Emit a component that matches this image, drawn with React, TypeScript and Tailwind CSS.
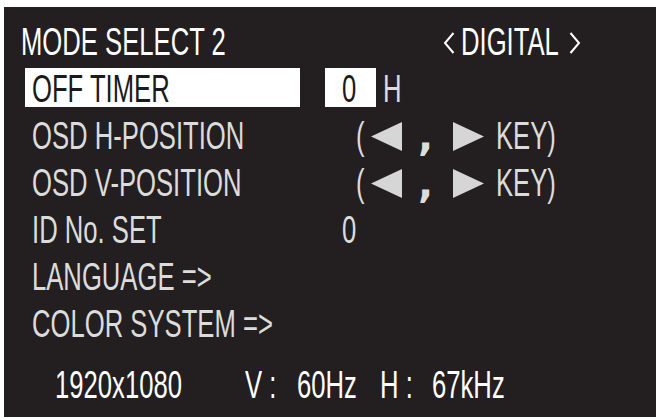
import clsx from "clsx";
import type { ReactNode } from "react";

// condensed OSD lettering: Liberation Sans squeezed horizontally
function T({ children, className }: { children: ReactNode; className?: string }) {
  return (
    <span
      className={clsx(
        "inline-block origin-left scale-x-[0.675] whitespace-nowrap",
        className
      )}
    >
      {children}
    </span>
  );
}

function Chevron({ dir }: { dir: "left" | "right" }) {
  return (
    <svg width="12" height="22" viewBox="0 0 12 22" className="mt-[13px] shrink-0">
      <polyline
        points={dir === "left" ? "10.5,1 2,11 10.5,21" : "1.5,1 10,11 1.5,21"}
        fill="none"
        stroke="#ffffff"
        strokeWidth="2"
      />
    </svg>
  );
}

function Arrow({ dir }: { dir: "left" | "right" }) {
  return (
    <svg width="31" height="29" viewBox="0 0 31 29" className="mt-[9px] shrink-0">
      <polygon
        points={dir === "left" ? "0,14.5 31,0 31,29" : "0,0 31,14.5 0,29"}
        fill="#d6d6d6"
      />
    </svg>
  );
}

function KeyRow({ label }: { label: string }) {
  return (
    <div className="flex h-[47px] items-start">
      <div className="w-[352px] shrink-0 pl-[28px]">
        <T>{label}</T>
      </div>
      <div className="w-[15px] shrink-0">
        <T>(</T>
      </div>
      <Arrow dir="left" />
      <div className="ml-[16px] w-[35px] shrink-0 font-['DejaVu_Sans',sans-serif] text-[40px] font-bold">
        ,
      </div>
      <Arrow dir="right" />
      <div className="ml-[12px]">
        <T>KEY)</T>
      </div>
    </div>
  );
}

function Row({ label, value }: { label: string; value?: string }) {
  return (
    <div className="flex h-[47px] items-start">
      <div className="w-[338px] shrink-0 pl-[28px]">
        <T>{label}</T>
      </div>
      {value && <T>{value}</T>}
    </div>
  );
}

export default function App() {
  return (
    <div className="h-[418px] w-[656px] overflow-hidden bg-white pl-[4px] pt-[7px] font-['Liberation_Sans',Arial,sans-serif] text-[38px] leading-[47px]">
      <div className="h-[410px] w-[652px] bg-[#231f20] pt-[12px] text-[#dcdcdc]">
        {/* title */}
        <div className="flex h-[47px] items-start text-white">
          <div className="w-[439px] shrink-0 pl-[17px]">
            <T>MODE SELECT 2</T>
          </div>
          <Chevron dir="left" />
          <div className="ml-[6px] w-[108px] shrink-0">
            <T>DIGITAL</T>
          </div>
          <Chevron dir="right" />
        </div>

        {/* selected row */}
        <div className="flex h-[47px] items-start">
          <div className="ml-[21px] mt-[2px] h-[39px] w-[275px] shrink-0 bg-white pl-[7px] leading-[43px] text-[#1a1a1a]">
            <T>OFF TIMER</T>
          </div>
          <div className="ml-[25px] mt-[2px] h-[39px] w-[51px] shrink-0 bg-white pl-[17px] leading-[43px] text-[#1a1a1a]">
            <T>0</T>
          </div>
          <div className="ml-[7px]">
            <T>H</T>
          </div>
        </div>

        <KeyRow label="OSD H-POSITION" />
        <KeyRow label="OSD V-POSITION" />
        <Row label="ID No. SET" value="0" />
        <Row label="LANGUAGE =>" />
        <Row label="COLOR SYSTEM =>" />

        {/* signal info */}
        <div className="mt-[14px] flex h-[47px] items-start text-white">
          <div className="w-[241px] shrink-0 pl-[51px]">
            <T>1920x1080</T>
          </div>
          <div className="w-[52px] shrink-0">
            <T>V :</T>
          </div>
          <div className="w-[83px] shrink-0">
            <T>60Hz</T>
          </div>
          <div className="w-[52px] shrink-0">
            <T>H :</T>
          </div>
          <T>67kHz</T>
        </div>
      </div>
    </div>
  );
}
